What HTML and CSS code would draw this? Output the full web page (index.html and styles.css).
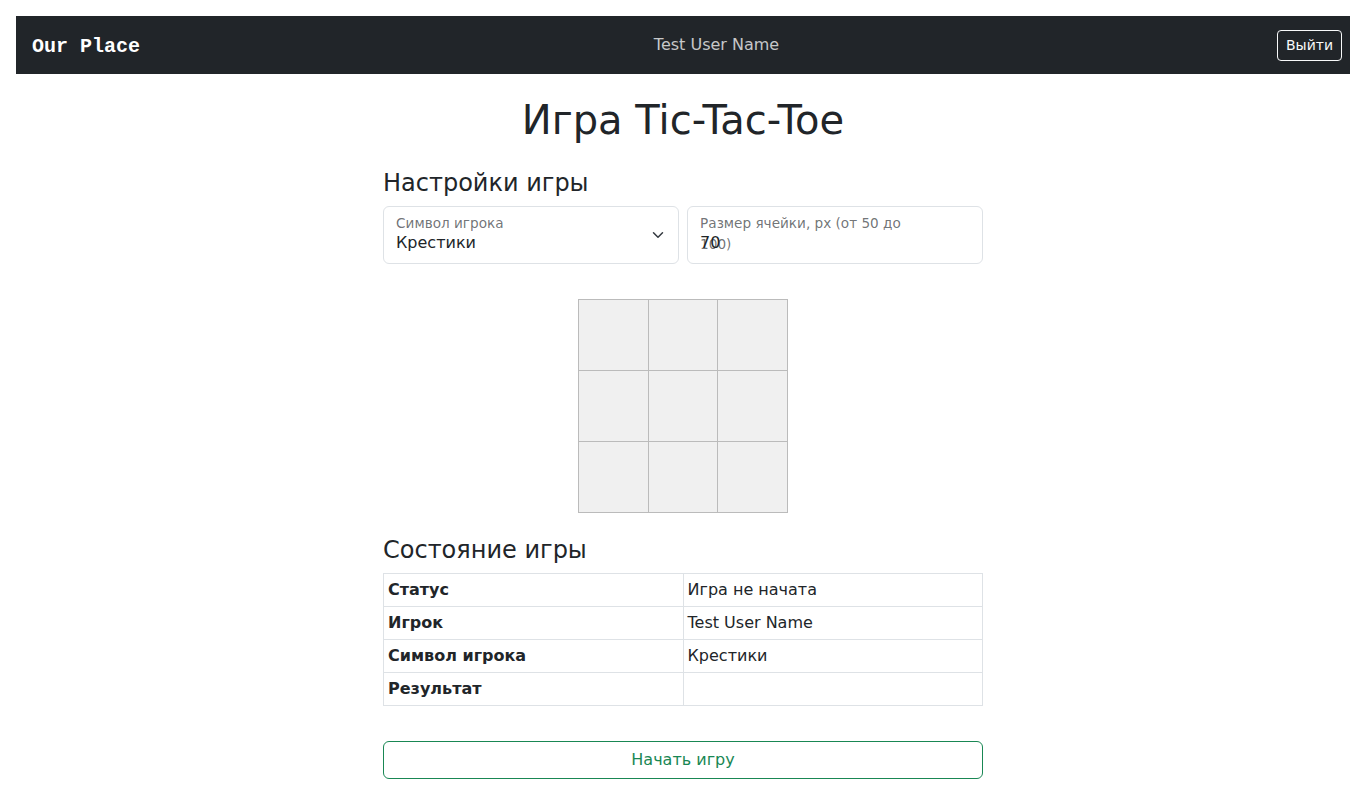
FILE: index.html
```html
<!DOCTYPE html>
<html lang="ru">
<head>
<meta charset="utf-8">
<title>Игра Tic-Tac-Toe</title>
<link rel="stylesheet" href="styles.css">
</head>
<body>
<nav class="navbar">
  <a class="brand" href="#">Our Place</a>
  <span class="nav-user">Test User Name</span>
  <button class="btn-logout" type="button">Выйти</button>
</nav>
<main class="page">
  <div class="column">
    <h1 class="title">Игра Tic-Tac-Toe</h1>
    <h4 class="section-title">Настройки игры</h4>
    <div class="settings">
      <div class="floating">
        <select class="control select" id="symbol">
          <option>Крестики</option>
          <option>Нолики</option>
        </select>
        <svg class="chevron" width="16" height="12" viewBox="0 0 16 16" aria-hidden="true"><path fill="none" stroke="#343a40" stroke-linecap="round" stroke-linejoin="round" stroke-width="2" d="m2 5 6 6 6-6"/></svg>
        <label class="float-label" for="symbol">Символ игрока</label>
      </div>
      <div class="floating">
        <input class="control" id="cell" type="number" value="70">
        <label class="float-label" for="cell">Размер ячейки, px (от 50 до 100)</label>
      </div>
    </div>
    <div class="board">
      <div class="cell"></div><div class="cell"></div><div class="cell"></div>
      <div class="cell"></div><div class="cell"></div><div class="cell"></div>
      <div class="cell"></div><div class="cell"></div><div class="cell"></div>
    </div>
    <h4 class="section-title">Состояние игры</h4>
    <table class="state">
      <tbody>
        <tr><th>Статус</th><td>Игра не начата</td></tr>
        <tr><th>Игрок</th><td>Test User Name</td></tr>
        <tr><th>Символ игрока</th><td>Крестики</td></tr>
        <tr><th>Результат</th><td></td></tr>
      </tbody>
    </table>
    <button class="btn-start" type="button">Начать игру</button>
  </div>
</main>
</body>
</html>
```
FILE: styles.css
```css
* { box-sizing: border-box; }
html, body { margin: 0; padding: 0; }
body {
  font-family: "DejaVu Sans", sans-serif;
  font-size: 16px;
  line-height: 1.5;
  color: #212529;
  background: #fff;
}
.navbar {
  margin: 16px 0 0 16px;
  height: 58px;
  background: #212529;
  display: flex;
  align-items: center;
  justify-content: space-between;
  padding: 0 8px 0 16px;
}
.brand {
  font-family: "Liberation Mono", monospace;
  font-weight: bold;
  font-size: 20px;
  line-height: 30px;
  padding-top: 3px;
  color: #fff;
  text-decoration: none;
  margin-right: 16px;
}
.nav-user {
  color: rgba(255, 255, 255, 0.75);
  font-size: 16px;
}
.btn-logout {
  font-family: "DejaVu Sans", sans-serif;
  font-size: 14px;
  line-height: 21px;
  padding: 4px 8px;
  border: 1px solid #f8f9fa;
  border-radius: 4px;
  background: transparent;
  color: #f8f9fa;
}
.page {
  margin-left: 16px;
  padding-top: 22px;
}
.column {
  width: 600px;
  margin: 0 auto;
}
.title {
  font-size: 40px;
  font-weight: 500;
  line-height: 1.2;
  text-align: center;
  margin: 0 0 25px;
}
.section-title {
  font-size: 24px;
  font-weight: 500;
  line-height: 1.2;
  margin: 0 0 8px;
}
.settings {
  display: grid;
  grid-template-columns: 1fr 1fr;
  gap: 8px;
}
.floating {
  position: relative;
}
.control {
  display: block;
  width: 100%;
  height: 58px;
  padding: 26px 12px 10px;
  font-family: "DejaVu Sans", sans-serif;
  font-size: 16px;
  line-height: 1.5;
  color: #212529;
  background: #fff;
  border: 1px solid #dee2e6;
  border-radius: 6px;
  appearance: none;
  -webkit-appearance: none;
  -moz-appearance: textfield;
  outline: none;
}
.control::-webkit-inner-spin-button,
.control::-webkit-outer-spin-button { -webkit-appearance: none; margin: 0; }
.select { padding: 24px 36px 12px 12px; }
.chevron {
  position: absolute;
  right: 13px;
  top: 23px;
  pointer-events: none;
}
.float-label {
  position: absolute;
  top: 0;
  left: 0;
  padding: 16px 12px;
  border: 1px solid transparent;
  color: rgba(33, 37, 41, 0.65);
  transform-origin: 0 0;
  transform: scale(0.85) translateY(-8px) translateX(2.4px);
  pointer-events: none;
}
.board {
  display: grid;
  grid-template-columns: 69px 68px 69px;
  grid-template-rows: repeat(3, 70px);
  gap: 1px;
  width: max-content;
  background: #bbbbbb;
  border: 1px solid #bbbbbb;
  margin: 35px auto 23px;
}
.cell { background: #f0f0f0; }
.state {
  width: 100%;
  border-collapse: collapse;
  table-layout: fixed;
  margin: 0;
}
.state th, .state td {
  border: 1px solid #dee2e6;
  padding: 4px;
  text-align: left;
  vertical-align: top;
  height: 33px;
}
.state th { font-weight: bold; }
.btn-start {
  display: block;
  width: 100%;
  margin-top: 35px;
  padding: 6px 12px;
  font-family: "DejaVu Sans", sans-serif;
  font-size: 16px;
  line-height: 24px;
  color: #198754;
  background: #fff;
  border: 1px solid #198754;
  border-radius: 6px;
}
```
